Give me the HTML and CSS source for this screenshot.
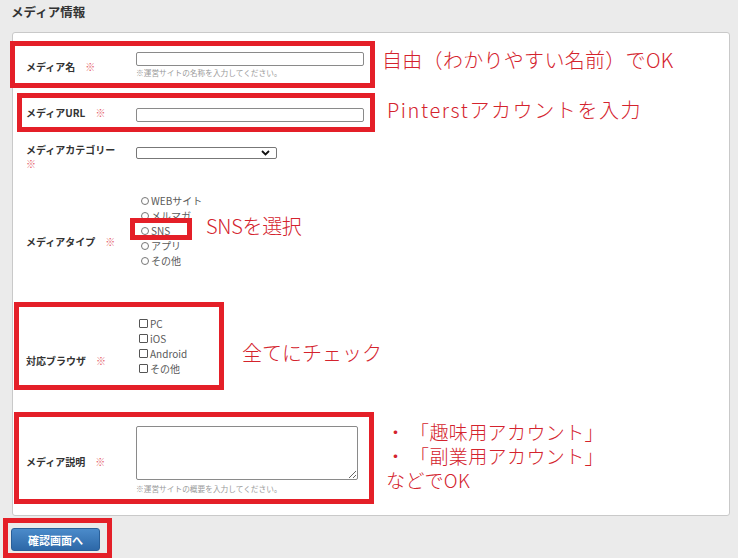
FILE: index.html
```html
<!DOCTYPE html>
<html lang="ja">
<head>
    <meta charset="UTF-8">
    <meta name="viewport" content="width=device-width, initial-scale=1.0">
    <title>メディア情報</title>
    <link rel="stylesheet" href="styles.css">
</head>
<body>
    <div class="page">
        <h2 class="title">メディア情報</h2>

        <!-- フォーム本体 -->
        <div class="panel">
            <div class="row row-name">
                <div class="label">メディア名<span class="req">※</span></div>
                <div class="field">
                    <input type="text" class="text">
                    <p class="hint">※運営サイトの名称を入力してください。</p>
                </div>
            </div>

            <div class="row row-url">
                <div class="label">メディアURL<span class="req">※</span></div>
                <div class="field">
                    <input type="text" class="text">
                </div>
            </div>

            <div class="row row-category">
                <div class="label">メディアカテゴリー<br><span class="req req-break">※</span></div>
                <div class="field">
                    <div class="select-wrap">
                        <select class="select"><option></option></select>
                        <svg class="chevron" width="9" height="6" viewBox="0 0 9 6"><path d="M1 1 L4.5 4.5 L8 1" fill="none" stroke="#111" stroke-width="1.8"/></svg>
                    </div>
                </div>
            </div>

            <div class="row row-type">
                <div class="label">メディアタイプ<span class="req">※</span></div>
                <div class="field">
                    <label class="option"><input type="radio" name="type" class="radio">WEBサイト</label>
                    <label class="option"><input type="radio" name="type" class="radio">メルマガ</label>
                    <label class="option"><input type="radio" name="type" class="radio">SNS</label>
                    <label class="option"><input type="radio" name="type" class="radio">アプリ</label>
                    <label class="option"><input type="radio" name="type" class="radio">その他</label>
                </div>
            </div>

            <div class="row row-browser">
                <div class="label">対応ブラウザ<span class="req">※</span></div>
                <div class="field">
                    <label class="option"><input type="checkbox" class="check">PC</label>
                    <label class="option"><input type="checkbox" class="check">iOS</label>
                    <label class="option"><input type="checkbox" class="check">Android</label>
                    <label class="option"><input type="checkbox" class="check">その他</label>
                </div>
            </div>

            <div class="row row-desc">
                <div class="label">メディア説明<span class="req">※</span></div>
                <div class="field">
                    <textarea class="area"></textarea>
                    <p class="hint hint-desc">※運営サイトの概要を入力してください。</p>
                </div>
            </div>
        </div>

        <button class="submit">確認画面へ</button>

        <!-- 赤枠と注釈 -->
        <div class="mark mark-name"></div>
        <div class="mark mark-url"></div>
        <div class="mark mark-sns"></div>
        <div class="mark mark-browser"></div>
        <div class="mark mark-desc"></div>
        <div class="mark mark-submit"></div>

        <p class="note note-name">自由（わかりやすい名前）でOK</p>
        <p class="note note-url">Pinterstアカウントを入力</p>
        <p class="note note-sns">SNSを選択</p>
        <p class="note note-browser">全てにチェック</p>
        <div class="note note-desc">
            <p class="note-line">・ 「趣味用アカウント」</p>
            <p class="note-line">・ 「副業用アカウント」</p>
            <p class="note-line">などでOK</p>
        </div>
    </div>
</body>
</html>
```

FILE: styles.css
```css
html, body {
    margin: 0;
    background-color: #ebebeb;
    overflow: hidden;
}

body {
    font-family: "Noto Sans CJK JP", "Noto Sans", sans-serif;
    color: #333;
}

.page {
    position: relative;
    padding: 4px 0 0 11px;
    height: 554px;
}

.title {
    margin: 0 0 12px;
    font-size: 12.5px;
    line-height: 16px;
    font-weight: bold;
    color: #333;
}

.panel {
    width: 718px;
    box-sizing: border-box;
    margin-left: 1px;
    padding-bottom: 20px;
    background-color: #fff;
    border: 1px solid #c9c9c9;
    border-radius: 3px;
}

.row {
    display: flex;
    align-items: flex-start;
    padding-left: 13px;
}

.label {
    width: 100px;
    margin-right: 10px;
    font-size: 10px;
    line-height: 14px;
    font-weight: bold;
    color: #333;
}

.req {
    margin-left: 10px;
    font-weight: normal;
    font-size: 10px;
    color: #e5606a;
}

.req-break {
    margin-left: 0;
}

.field {
    display: flex;
    flex-direction: column;
}

/* 行ごとの縦位置 */
.row-name { padding-top: 19px; }
.row-name .label { margin-top: 8px; }

.row-url { padding-top: 27px; }
.row-url .text { margin-top: 2px; }

.row-category { padding-top: 21px; }
.row-category .select-wrap { margin-top: 4px; }

.row-type { padding-top: 22px; }
.row-type .label { margin-top: 42px; }

.row-browser { padding-top: 48px; }
.row-browser .label { margin-top: 38px; }

.row-desc { padding-top: 50px; }
.row-desc .label { margin-top: 29px; }

.text {
    display: block;
    width: 228px;
    height: 14px;
    box-sizing: border-box;
    padding: 0;
    margin: 0;
    border: 1px solid #8a8a8a;
    border-radius: 2px;
    background: #fff;
}

.hint {
    margin: 1px 0 0;
    font-size: 7.7px;
    line-height: 12px;
    color: #9a9a9a;
    white-space: nowrap;
}

.hint-desc {
    margin-top: 3px;
}

.select-wrap {
    position: relative;
    width: 141px;
    height: 12px;
}

.select {
    display: block;
    width: 141px;
    height: 12px;
    box-sizing: border-box;
    padding: 0;
    margin: 0;
    border: 1px solid #777;
    border-radius: 2px;
    background: #fff;
    appearance: none;
    -webkit-appearance: none;
}

.chevron {
    position: absolute;
    top: 3px;
    right: 7px;
}

.option {
    display: flex;
    align-items: center;
    height: 15px;
    font-size: 10px;
    color: #5a5a5a;
}

.radio {
    appearance: none;
    -webkit-appearance: none;
    width: 8px;
    height: 8px;
    margin: 0 2px 0 5px;
    border: 1px solid #777;
    border-radius: 50%;
    background: #fff;
}

.check {
    appearance: none;
    -webkit-appearance: none;
    width: 9px;
    height: 9px;
    margin: 0 2px 0 3px;
    border: 1px solid #555;
    border-radius: 1px;
    background: #fff;
}

.area {
    display: block;
    width: 222px;
    height: 54px;
    box-sizing: border-box;
    margin: 0;
    border: 1px solid #8a8a8a;
    border-radius: 2px;
    resize: both;
}

.submit {
    display: block;
    width: 89px;
    height: 23px;
    margin-top: 12px;
    padding: 0;
    font-family: inherit;
    font-size: 11px;
    font-weight: bold;
    color: #fff;
    background: linear-gradient(to bottom, #4b8bca, #2d68a8);
    border: 1px solid #2a5f98;
    border-radius: 3px;
}

/* === 赤枠 === */
.mark {
    position: absolute;
    box-sizing: border-box;
    border: 5px solid #e41f28;
}

.mark-name { left: 10px; top: 41px; width: 365px; height: 47px; }
.mark-url { left: 17px; top: 93px; width: 358px; height: 39px; }
.mark-sns { left: 130px; top: 218px; width: 62px; height: 22px; }
.mark-browser { left: 14px; top: 302px; width: 210px; height: 88px; }
.mark-desc { left: 14px; top: 412px; width: 360px; height: 92px; }
.mark-submit { left: 3px; top: 518px; width: 109px; height: 40px; }

/* === 注釈 === */
.note {
    position: absolute;
    margin: 0;
    font-size: 20px;
    line-height: 24px;
    font-weight: 300;
    color: #d4232d;
    white-space: nowrap;
}

.note-name { left: 382px; top: 48px; letter-spacing: 0.3px; }
.note-url { left: 387px; top: 98px; letter-spacing: 1.6px; }
.note-sns { left: 206px; top: 214px; letter-spacing: -0.3px; }
.note-browser { left: 242px; top: 341px; }
.note-desc { left: 386px; top: 422px; }

.note-line {
    margin: 0;
    height: 24px;
    font-size: 19px;
    line-height: 20px;
    letter-spacing: 0.4px;
}
```
